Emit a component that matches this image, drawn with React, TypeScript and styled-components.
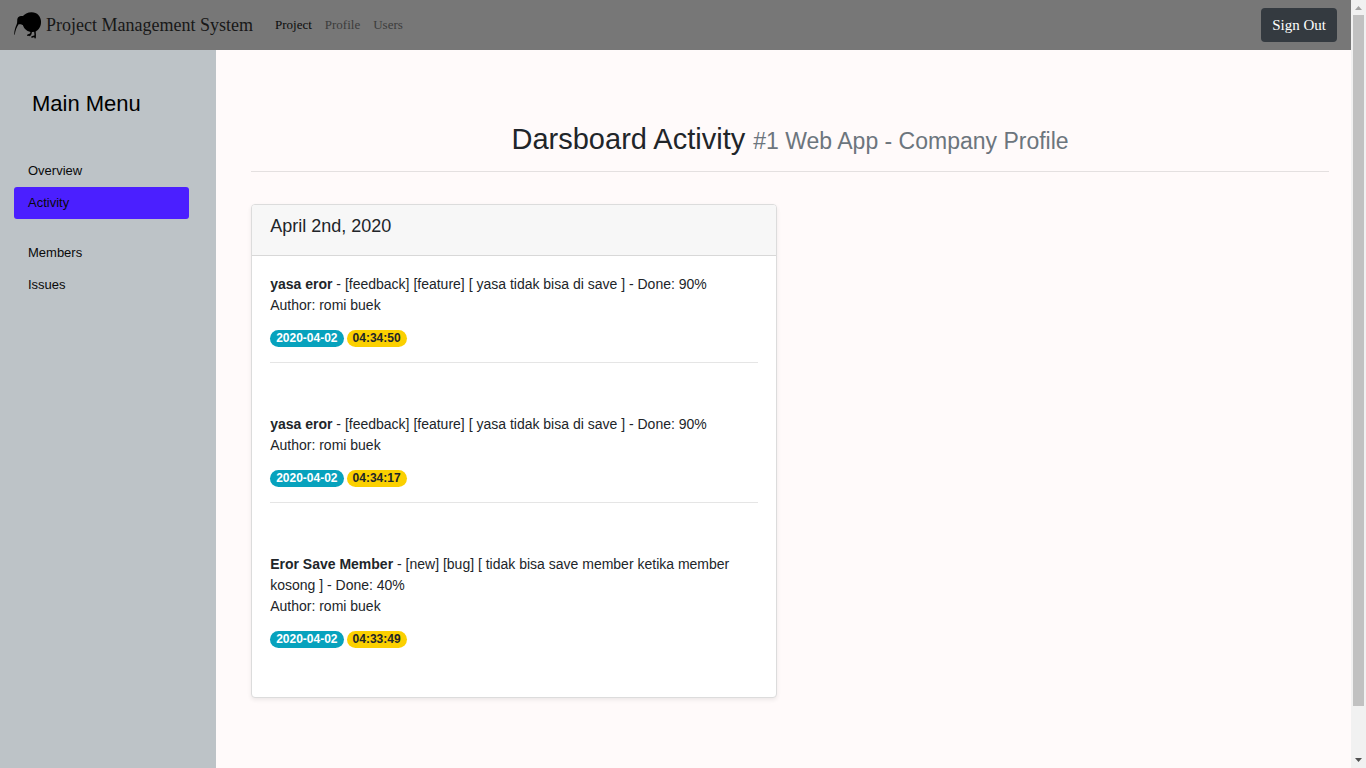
import React from "react";
import styled, { createGlobalStyle } from "styled-components";

const sans = `"Liberation Sans", Arial, sans-serif`;
const serif = `"Liberation Serif", "Times New Roman", serif`;

const GlobalStyle = createGlobalStyle`
  *, *::before, *::after { box-sizing: border-box; }
  body {
    margin: 0;
    background: #fffafa;
    color: #212529;
    font-family: ${sans};
    font-size: 14px;
    line-height: 21px;
  }
`;

const Shell = styled.div`
  display: flex;
  min-height: 100vh;
`;

const Page = styled.div`
  flex: 1;
  min-width: 0;
  display: flex;
  flex-direction: column;
`;

const Navbar = styled.header`
  display: flex;
  align-items: center;
  flex-shrink: 0;
  min-height: 50px;
  padding: 0 14px;
  background: #777;
  font-family: ${serif};
`;

const Brand = styled.a`
  display: flex;
  align-items: center;
  gap: 5px;
  margin-right: 22px;
  color: #181818;
  font-size: 18px;
  line-height: 27px;
  text-decoration: none;
`;

const NavLinks = styled.nav`
  display: flex;
  gap: 13px;
  flex: 1;
  padding-bottom: 2px;
`;

const NavLink = styled.a<{ $active?: boolean }>`
  color: ${(p) => (p.$active ? "#0c0c0c" : "#3c3c3c")};
  font-size: 13px;
  text-decoration: none;
`;

const SignOut = styled.button`
  height: 34px;
  padding: 0 11px;
  border: 0;
  border-radius: 4px;
  background: #343a40;
  color: #fff;
  font-family: ${serif};
  font-size: 15px;
  cursor: pointer;
`;

const Columns = styled.div`
  display: flex;
  flex: 1;
`;

const Sidebar = styled.aside`
  width: 16%;
  padding: 42px 27px 0 14px;
  background: #bdc3c7;
`;

const MenuTitle = styled.h2`
  margin: 0 0 39px;
  padding-left: 18px;
  color: #000;
  font-size: 22px;
  font-weight: 400;
  line-height: 24px;
`;

const MenuGroup = styled.nav`
  display: flex;
  flex-direction: column;
  margin-bottom: 18px;
`;

const MenuLink = styled.a<{ $active?: boolean }>`
  padding: 0 14px;
  border-radius: 3px;
  background: ${(p) => (p.$active ? "#4b1fff" : "transparent")};
  color: #0a0a0a;
  font-size: 13px;
  line-height: 32px;
  text-decoration: none;
`;

const Main = styled.main`
  flex: 1;
  min-width: 0;
  padding: 72px 22px 32px 35px;
`;

const Title = styled.h1`
  margin: 0 0 32px;
  padding-bottom: 12px;
  border-bottom: 1px solid #e4e0e0;
  font-size: 29px;
  font-weight: 400;
  line-height: 35px;
  text-align: center;
`;

const Subtitle = styled.small`
  color: #6c757d;
  font-size: 23px;
`;

const Card = styled.section`
  width: calc(50% - 13px);
  border: 1px solid #dcdcdc;
  border-radius: 4px;
  background: #fff;
  box-shadow: 0 2px 4px rgba(0, 0, 0, 0.075);
`;

const CardHeader = styled.h2`
  margin: 0;
  padding: 10px 18px 18px;
  border-bottom: 1px solid #d8d8d8;
  border-radius: 3px 3px 0 0;
  background: #f7f7f7;
  font-size: 18px;
  font-weight: 400;
  line-height: 22px;
`;

const Entries = styled.div`
  display: flex;
  flex-direction: column;
  gap: 51px;
  padding: 18px 18px 34px;
`;

const Entry = styled.article`
  padding-bottom: 15px;

  &:not(:last-child) {
    border-bottom: 1px solid #e5e5e5;
  }
`;

const EntryText = styled.p`
  margin: 0 0 14px;
`;

const Badges = styled.div`
  display: flex;
  gap: 3px;
`;

const Badge = styled.time<{ $tone: "info" | "warning" }>`
  padding: 0 6px;
  border-radius: 9px;
  background: ${(p) => (p.$tone === "info" ? "#07a2bd" : "#fbd000")};
  color: ${(p) => (p.$tone === "info" ? "#fff" : "#212529")};
  font-size: 12px;
  font-weight: 700;
  line-height: 17px;
`;

const ScrollTrack = styled.div`
  display: flex;
  flex-direction: column;
  align-items: center;
  width: 15px;
  height: 100vh;
  background: #f1f1f1;
`;

const ScrollThumb = styled.div`
  width: 11px;
  height: 90%;
  margin-bottom: auto;
  background: #c1c1c1;
`;

const ScrollArrow = styled.svg`
  display: block;
  flex-shrink: 0;
`;

function Kiwi() {
  return (
    <svg width="27" height="27" viewBox="0 0 27 27" aria-hidden="true">
      <path d="M8 5C10.6 2.2 13.6 0.2 17.6 0.2C23.2 0.2 27 4.4 27 10C27 15.6 23.6 20 18.6 20C13.6 20 10 17.4 8.6 12.2Z" />
      <path d="M10.6 3.9C9 4.3 8.2 4 6.9 4.1C4.3 4.4 3 6.4 3.2 9C3.3 10.4 3 11.4 2.5 12.8C1.2 16 0.2 18.6 0.3 22.8H0.8C1.2 19 2.4 15.4 4.6 12.3C6.8 12.5 8 12 10.4 14.4Z" />
      <path
        d="M17.3 19L17 21.2L15.8 23.4M16.8 22L13.8 23.2M20.8 18.6L21.2 22.5L21.1 25.8M21 24L18 25"
        fill="none"
        stroke="#000"
        strokeWidth="1.5"
        strokeLinecap="round"
        strokeLinejoin="round"
      />
    </svg>
  );
}

const entries = [
  {
    title: "yasa eror",
    detail: "[feedback] [feature] [ yasa tidak bisa di save ] - Done: 90%",
    time: "04:34:50",
  },
  {
    title: "yasa eror",
    detail: "[feedback] [feature] [ yasa tidak bisa di save ] - Done: 90%",
    time: "04:34:17",
  },
  {
    title: "Eror Save Member",
    detail:
      "[new] [bug] [ tidak bisa save member ketika member kosong ] - Done: 40%",
    time: "04:33:49",
  },
];

export default function App() {
  return (
    <>
      <GlobalStyle />
      <Shell>
        <Page>
          <Navbar>
            <Brand href="#">
              <Kiwi />
              Project Management System
            </Brand>
            <NavLinks>
              <NavLink href="#" $active>
                Project
              </NavLink>
              <NavLink href="#">Profile</NavLink>
              <NavLink href="#">Users</NavLink>
            </NavLinks>
            <SignOut type="button">Sign Out</SignOut>
          </Navbar>
          <Columns>
            <Sidebar>
              <MenuTitle>Main Menu</MenuTitle>
              <MenuGroup>
                <MenuLink href="#">Overview</MenuLink>
                <MenuLink href="#" $active>
                  Activity
                </MenuLink>
              </MenuGroup>
              <MenuGroup>
                <MenuLink href="#">Members</MenuLink>
                <MenuLink href="#">Issues</MenuLink>
              </MenuGroup>
            </Sidebar>
            <Main>
              <Title>
                Darsboard Activity{" "}
                <Subtitle>#1 Web App - Company Profile</Subtitle>
              </Title>
              <Card>
                <CardHeader>April 2nd, 2020</CardHeader>
                <Entries>
                  {entries.map((entry) => (
                    <Entry key={entry.time}>
                      <EntryText>
                        <strong>{entry.title}</strong> - {entry.detail}
                        <br />
                        Author: romi buek
                      </EntryText>
                      <Badges>
                        <Badge $tone="info">2020-04-02</Badge>
                        <Badge $tone="warning">{entry.time}</Badge>
                      </Badges>
                    </Entry>
                  ))}
                </Entries>
              </Card>
            </Main>
          </Columns>
        </Page>
        <ScrollTrack aria-hidden="true">
          <ScrollArrow width="15" height="15" viewBox="0 0 15 15">
            <path d="M4 10L7.5 6L11 10Z" fill="#a3a3a3" />
          </ScrollArrow>
          <ScrollThumb />
          <ScrollArrow width="15" height="15" viewBox="0 0 15 15">
            <path d="M4 5L7.5 9L11 5Z" fill="#505050" />
          </ScrollArrow>
        </ScrollTrack>
      </Shell>
    </>
  );
}
